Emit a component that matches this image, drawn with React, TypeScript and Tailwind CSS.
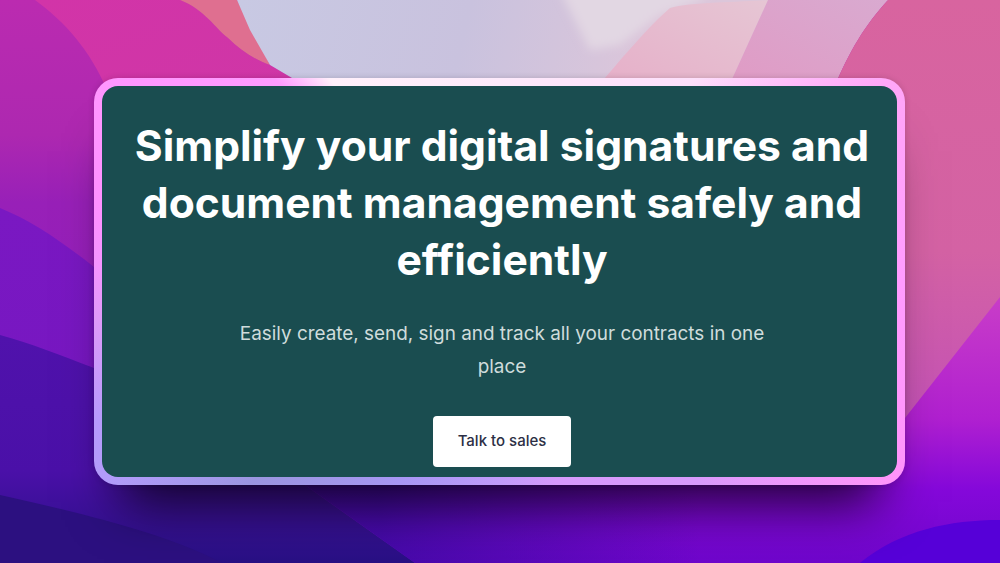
const font = "[font-family:Inter,'Liberation_Sans',sans-serif]"

// wallpaper behind the card
function Wallpaper() {
  return (
    <svg className="absolute inset-0 w-full h-full" viewBox="0 0 1000 563" preserveAspectRatio="none">
      <defs>
        <linearGradient id="base" x1="0" y1="0" x2="0" y2="1">
          <stop offset="0" stopColor="#bb2bb0" />
          <stop offset="0.24" stopColor="#ad28b0" />
          <stop offset="0.36" stopColor="#9820b8" />
          <stop offset="1" stopColor="#8a1cc0" />
        </linearGradient>
        <linearGradient id="waveA" x1="0" y1="0" x2="0" y2="1">
          <stop offset="0" stopColor="#7a18c2" />
          <stop offset="1" stopColor="#7416c0" />
        </linearGradient>
        <linearGradient id="waveB" x1="0" y1="0" x2="0" y2="1">
          <stop offset="0" stopColor="#5012ac" />
          <stop offset="0.6" stopColor="#4a10a8" />
          <stop offset="1" stopColor="#281084" />
        </linearGradient>
        <linearGradient id="magenta" x1="0" y1="0" x2="1" y2="1">
          <stop offset="0" stopColor="#d234a8" />
          <stop offset="1" stopColor="#cf36a6" />
        </linearGradient>
        <linearGradient id="light" gradientUnits="userSpaceOnUse" x1="240" y1="0" x2="640" y2="90">
          <stop offset="0" stopColor="#c8c9e3" />
          <stop offset="0.55" stopColor="#c9c2de" />
          <stop offset="1" stopColor="#dcc6da" />
        </linearGradient>
        <linearGradient id="pinkA" x1="1" y1="0" x2="0" y2="1">
          <stop offset="0" stopColor="#e6c6d4" />
          <stop offset="1" stopColor="#e6aec8" />
        </linearGradient>
        <linearGradient id="pinkB" x1="1" y1="0" x2="0" y2="1">
          <stop offset="0" stopColor="#d9aad0" />
          <stop offset="1" stopColor="#e09ac4" />
        </linearGradient>
        <linearGradient id="rose" gradientUnits="userSpaceOnUse" x1="0" y1="0" x2="0" y2="420">
          <stop offset="0" stopColor="#d8649f" />
          <stop offset="0.6" stopColor="#d462a4" />
          <stop offset="1" stopColor="#c452b6" />
        </linearGradient>
        <linearGradient id="violet" gradientUnits="userSpaceOnUse" x1="0" y1="300" x2="0" y2="563">
          <stop offset="0" stopColor="#c83cc8" />
          <stop offset="0.45" stopColor="#b020d0" />
          <stop offset="0.72" stopColor="#8508da" />
          <stop offset="1" stopColor="#6f06cc" />
        </linearGradient>
        <linearGradient id="fadeLeft" gradientUnits="userSpaceOnUse" x1="380" y1="0" x2="700" y2="0">
          <stop offset="0" stopColor="#3a0aa0" stopOpacity="0.8" />
          <stop offset="1" stopColor="#3a0aa0" stopOpacity="0" />
        </linearGradient>
        <filter id="soft">
          <feGaussianBlur stdDeviation="5" />
        </filter>
      </defs>
      <rect width="1000" height="563" fill="url(#base)" />
      <path d="M0 208 C30 220 60 240 94 267 L200 300 L200 563 L0 563 Z" fill="url(#waveA)" />
      <path d="M0 335 C30 343 60 355 94 368 L420 440 L420 563 L0 563 Z" fill="url(#waveB)" />
      <path d="M0 495 C90 515 170 535 222 563 L0 563 Z" fill="#2c1080" />
      <path d="M35 0 C65 22 90 50 107 90 L310 90 L292 78 L270 65 C255 60 240 50 228 38 C215 28 205 10 180 0 Z" fill="url(#magenta)" />
      <path d="M180 0 C205 10 215 28 228 38 C240 50 255 60 270 65 L237 0 Z" fill="#df6f90" />
      <path d="M237 0 L250 30 L270 65 L292 78 L300 100 L700 100 L888 0 Z" fill="url(#light)" />
      <path d="M555 -20 L720 -20 L700 0 L660 15 L620 45 L590 50 Z" fill="#e2d7e3" filter="url(#soft)" />
      <path d="M595 90 C620 60 650 25 670 8 C690 2 750 2 768 0 L727 90 Z" fill="url(#pinkA)" />
      <path d="M727 90 L768 0 L888 0 C865 25 850 50 833 90 Z" fill="url(#pinkB)" />
      <path d="M888 0 C865 25 850 50 833 90 L880 90 L880 430 L905 430 L1000 300 L1000 0 Z" fill="url(#rose)" />
      <path d="M1000 297 L905 418 L800 420 L305 420 L305 485 L415 563 L1000 563 Z" fill="url(#violet)" />
      <path d="M305 485 L415 563 L700 563 L700 420 L305 420 Z" fill="url(#fadeLeft)" />
      <path d="M860 563 C900 530 950 520 1000 520 L1000 563 Z" fill="#5600d8" />
    </svg>
  )
}

export default function App() {
  return (
    <div className={`relative w-[1000px] h-[563px] overflow-hidden flex justify-center pt-[78px] pr-px ${font}`}>
      <Wallpaper />
      <div className="relative w-[811px] h-[407px] p-2 rounded-3xl bg-[conic-gradient(#fdeafb_0deg,#fde0fb_44deg,#ffc0fa_55deg,#ffa6f8_63deg,#ff9cff_90deg,#ff94fa_117deg,#f896fb_120deg,#d89afc_135deg,#d69afc_164deg,#c09bfa_180deg,#a896f5_206deg,#9b96e0_231deg,#b19bfa_243deg,#b69bfc_251deg,#e09af8_265deg,#f494ff_272deg,#ff90ff_281deg,#ff9cff_312deg,#fff0fb_320deg,#fdeafb_360deg)] shadow-[0_45px_50px_-28px_rgba(0,0,0,0.8),0_0_6px_rgba(0,0,0,0.15)]">
        <div className="h-full rounded-2xl bg-[#1a4d50] flex flex-col items-center pt-[31px] pl-[5px]">
          <h1 className="w-[770px] text-center text-white font-bold text-[42.6px] leading-[57px]">
            Simplify your digital signatures and document management safely and efficiently
          </h1>
          <p className="mt-[29px] w-[560px] text-center text-[#cfdcdc] text-[18.9px] leading-[33px]">
            Easily create, send, sign and track all your contracts in one place
          </p>
          <button className="mt-[33px] w-[138px] h-[51px] rounded bg-white text-[#2c2f45] text-[15px] font-medium">
            Talk to sales
          </button>
        </div>
      </div>
    </div>
  )
}
